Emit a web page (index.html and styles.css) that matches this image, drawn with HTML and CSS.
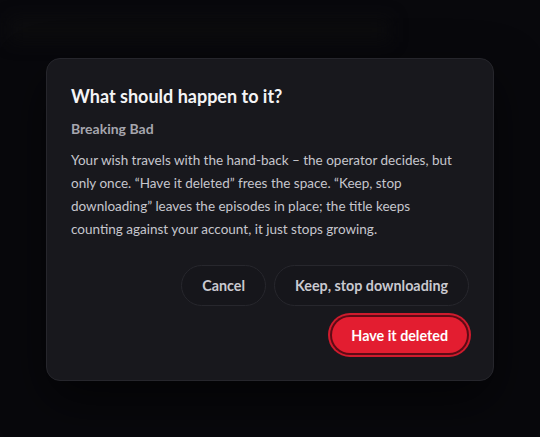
FILE: index.html
```html
<!DOCTYPE html>
<html>
<head>
<meta charset="utf-8">
<link rel="stylesheet" href="styles.css">
</head>
<body>
<div class="backdrop">
  <div class="ghost"></div>
  <div class="dialog">
    <h2 class="title">What should happen to it?</h2>
    <div class="subtitle">Breaking Bad</div>
    <p class="body">Your wish travels with the hand-back – the operator decides, but only once. “Have it deleted” frees the space. “Keep, stop downloading” leaves the episodes in place; the title keeps counting against your account, it just stops growing.</p>
    <div class="actions">
      <button class="btn ghost-btn">Cancel</button>
      <button class="btn ghost-btn">Keep, stop downloading</button>
      <button class="btn danger">Have it deleted</button>
    </div>
  </div>
</div>
</body>
</html>
```
FILE: styles.css
```css
html, body {
  margin: 0;
  padding: 0;
  background: #08080c;
  width: 540px;
  height: 437px;
  overflow: hidden;
}
body {
  font-family: Lato, "Open Sans", sans-serif;
}
.backdrop {
  position: relative;
  width: 540px;
  height: 437px;
  padding-top: 58px;
  box-sizing: border-box;
}
.ghost {
  position: absolute;
  left: 10px;
  top: 18px;
  width: 380px;
  height: 24px;
  background: #0c0c0e;
  filter: blur(8px);
}
.dialog {
  position: relative;
  margin-left: 46px;
  width: 448px;
  box-sizing: border-box;
  background: #18181d;
  border: 1px solid #26262c;
  border-radius: 14px;
  padding: 26px 24px 23px 24px;
  box-shadow: 0 20px 50px rgba(0,0,0,0.6);
}
.title {
  margin: 0;
  font-size: 18px;
  font-weight: 700;
  color: #f4f4f6;
  line-height: 22px;
}
.subtitle {
  margin-top: 13px;
  font-size: 14px;
  font-weight: 700;
  color: #a6a6ae;
  line-height: 18px;
}
.body {
  margin: 11px 0 0 0;
  max-width: 390px;
  font-size: 13.5px;
  line-height: 23px;
  color: #c6c6cd;
}
.actions {
  margin-top: 24px;
  display: flex;
  flex-wrap: wrap;
  justify-content: flex-end;
  column-gap: 8px;
  row-gap: 7px;
}
.btn {
  font-family: inherit;
  font-size: 14.3px;
  font-weight: 700;
  height: 41px;
  border-radius: 999px;
  padding: 0 20px;
  cursor: pointer;
}
.ghost-btn {
  background: #16161b;
  border: 1px solid #27272d;
  color: #c9c9d0;
}
.danger {
  background: #e31d30;
  border: none;
  color: #fff;
  margin: 4px 2px 4px 0;
  height: 36px;
  padding: 0 19px;
  box-shadow: 0 0 0 2px #5e0b15, 0 0 0 4px #cf1b2d;
}
```
